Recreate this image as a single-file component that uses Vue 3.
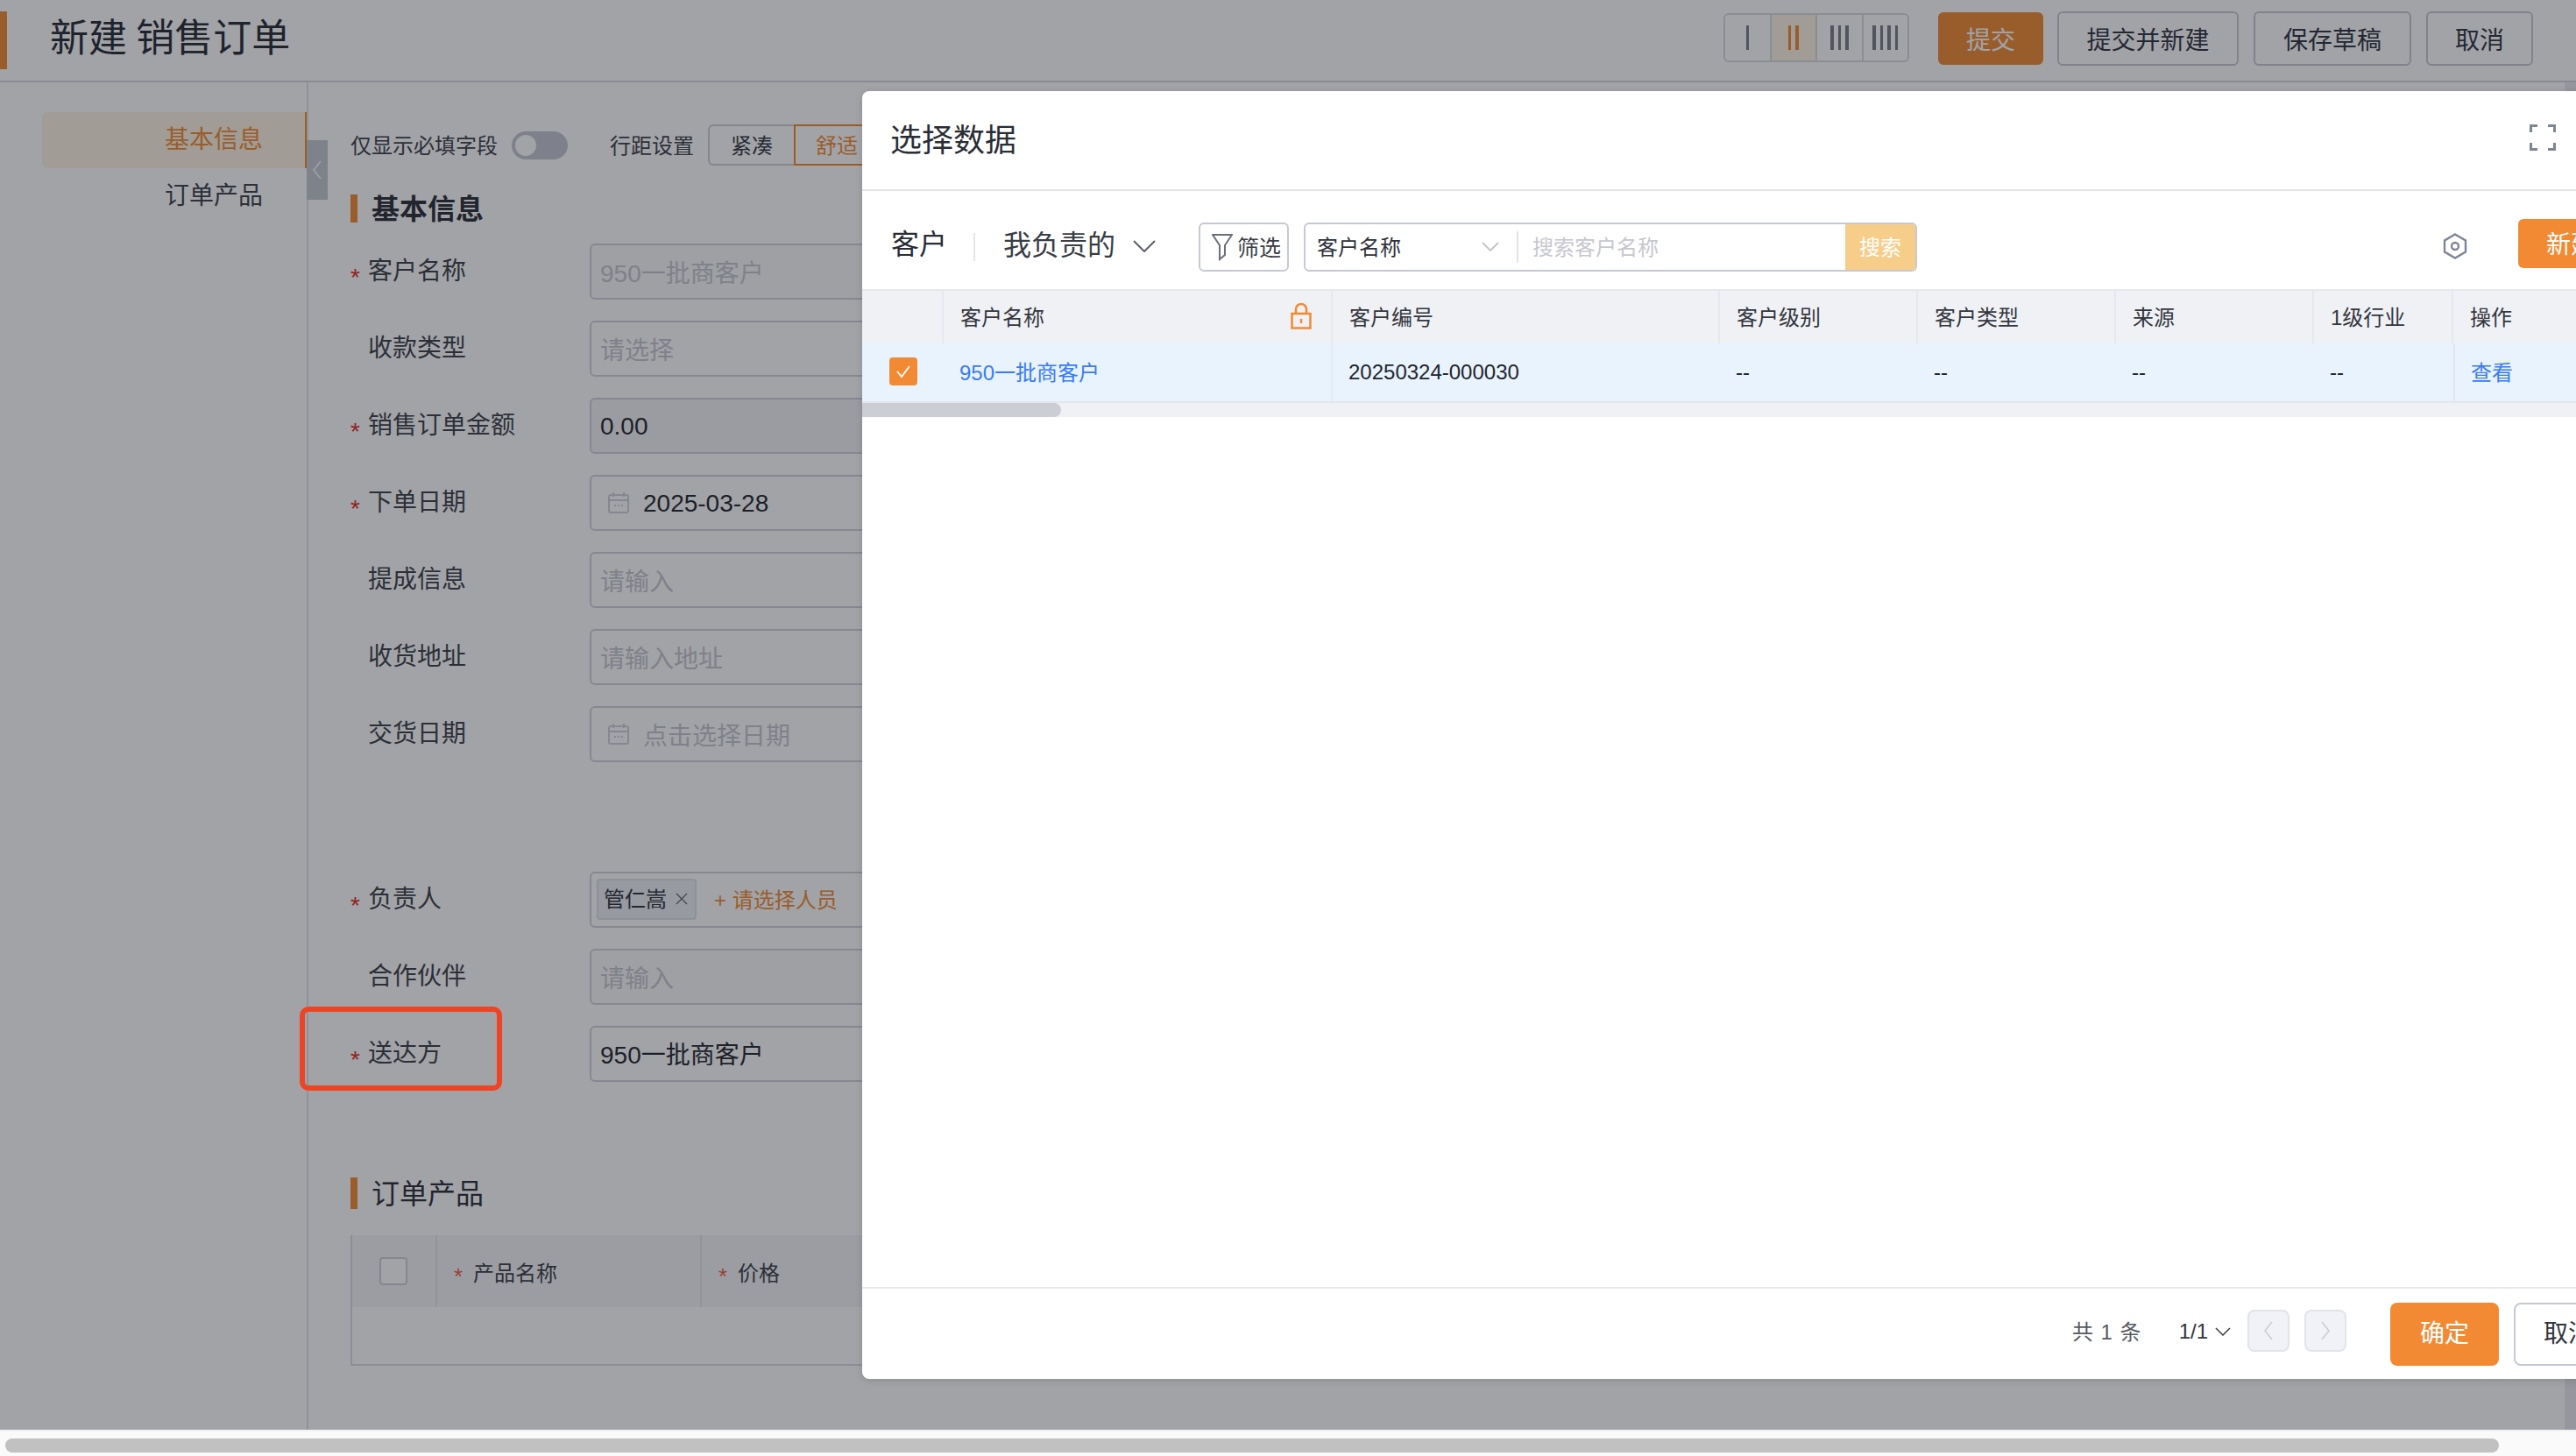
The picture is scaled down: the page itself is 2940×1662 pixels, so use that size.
<script setup>
const barGroups = [1, 2, 3, 4]
const actions = [
  { text: '提交', cls: 'act-primary' },
  { text: '提交并新建', cls: 'act-wide' },
  { text: '保存草稿', cls: 'act-draft' },
  { text: '取消', cls: 'act-cancel' }
]
const rowsA = [
  { label: '客户名称', req: true, text: '950一批商客户', kind: 'ph', bg: 'soft' },
  { label: '收款类型', text: '请选择', kind: 'ph' },
  { label: '销售订单金额', req: true, text: '0.00', kind: 'val low', bg: 'dis' },
  { label: '下单日期', req: true, text: '2025-03-28', kind: 'val low', icon: true },
  { label: '提成信息', text: '请输入', kind: 'ph' },
  { label: '收货地址', text: '请输入地址', kind: 'ph' },
  { label: '交货日期', text: '点击选择日期', kind: 'ph', icon: true }
]
const heads = ['客户级别', '客户类型', '来源', '1级行业']
</script>

<template>
  <div class="app">
    <div class="viewport">
      <header class="page-head">
        <i class="head-mark"></i>
        <h1 class="page-title">新建 销售订单</h1>
        <div class="bars">
          <div v-for="n in barGroups" :key="n" class="bar-cell" :class="{ on: n === 2 }">
            <i v-for="b in n" :key="b" class="bar"></i>
          </div>
        </div>
        <div class="actions">
          <button v-for="a in actions" :key="a.text" class="act" :class="a.cls">{{ a.text }}</button>
        </div>
      </header>

      <div class="page-body">
        <aside class="side">
          <div class="nav nav-on">基本信息</div>
          <div class="nav">订单产品</div>
          <div class="collapse">
            <svg width="12" height="24" viewBox="0 0 12 24"><path d="M10 2 2 12l8 10" fill="none" stroke="#fff" stroke-width="1.4"/></svg>
          </div>
        </aside>

        <main class="main">
          <div class="opts">
            <span class="opt-text">仅显示必填字段</span>
            <span class="toggle"><i class="knob"></i></span>
            <span class="opt-text opt-gap">行距设置</span>
            <div class="seg">
              <span class="seg-item">紧凑</span>
              <span class="seg-item seg-on">舒适</span>
            </div>
          </div>

          <h2 class="sec sec-bold"><i class="sec-mark"></i><span class="sec-text">基本信息</span></h2>

          <div class="form">
            <div v-for="r in rowsA" :key="r.label" class="row">
              <label class="lab"><i class="star">{{ r.req ? '*' : '' }}</i>{{ r.label }}</label>
              <div class="inp" :class="r.bg">
                <svg v-if="r.icon" class="cal" width="24" height="24" viewBox="0 0 24 24" fill="none" stroke="#d0d2da" stroke-width="2">
                  <rect x="1" y="3" width="22" height="20" rx="2"/>
                  <path d="M1 9h22M6 0v5M18 0v5M7 15h2M11 15h2M15 15h2"/>
                </svg>
                <span :class="r.kind">{{ r.text }}</span>
              </div>
            </div>

            <div class="row row-owner">
              <label class="lab"><i class="star">*</i>负责人</label>
              <div class="inp">
                <span class="tag"><span class="up2">管仁嵩</span>
                  <svg width="16" height="16" viewBox="0 0 16 16"><path d="M2 2l12 12M14 2 2 14" stroke="#666b78" stroke-width="1.4" fill="none"/></svg>
                </span>
                <span class="add up2">+ 请选择人员</span>
              </div>
            </div>
            <div class="row">
              <label class="lab"><i class="star"></i>合作伙伴</label>
              <div class="inp soft"><span class="ph">请输入</span></div>
            </div>
            <div class="row">
              <label class="lab"><i class="star">*</i>送达方</label>
              <div class="inp"><span class="val up1">950一批商客户</span></div>
            </div>
          </div>

          <h2 class="sec sec-second"><i class="sec-mark sec-mark-tall"></i><span class="sec-text">订单产品</span></h2>

          <div class="ptable">
            <div class="ptable-head">
              <div class="pc pc-check"><i class="pbox"></i></div>
              <div class="pc pc-name"><i class="pstar">*</i>产品名称</div>
              <div class="pc"><i class="pstar">*</i>价格</div>
            </div>
            <div class="ptable-body"></div>
          </div>
        </main>

        <div class="vscroll"></div>
      </div>

      <div class="overlay"></div>
      <div class="mark-box"></div>

      <section class="modal">
        <div class="m-head">
          <span class="m-title">选择数据</span>
          <svg width="30" height="30" viewBox="0 0 30 30" fill="none" stroke="#7e8594" stroke-width="3">
            <path d="M1.500 9V1.500H9M21 1.500h7.500V9M28.500 21v7.500H21M9 28.500H1.500V21"/>
          </svg>
        </div>

        <div class="m-tools">
          <span class="m-obj">客户</span>
          <i class="m-div"></i>
          <span class="m-scope">我负责的</span>
          <svg class="m-chev" width="26" height="14" viewBox="0 0 26 14"><path d="M1 1l12 12L25 1" fill="none" stroke="#5c606a" stroke-width="2"/></svg>
          <button class="m-filter">
            <svg width="24" height="32" viewBox="0 0 24 32" fill="none" stroke="#6a6f7b" stroke-width="2">
              <path d="M1 2h22L15 14v11l-6 5V14z"/>
            </svg>
            <span class="up2">筛选</span>
          </button>
          <div class="m-search">
            <div class="m-sel"><span class="up2">客户名称</span>
              <svg width="20" height="12" viewBox="0 0 20 12"><path d="M1 1l9 9 9-9" fill="none" stroke="#c0c3cb" stroke-width="1.800"/></svg>
            </div>
            <span class="m-input up2">搜索客户名称</span>
            <span class="m-go"><span class="up2">搜索</span></span>
          </div>
          <svg class="m-gear" width="30" height="30" viewBox="0 0 30 30" fill="none" stroke="#7e8594" stroke-width="2.400">
            <path d="M15 1.500 27 8.500v13L15 28.500 3 21.500v-13z"/>
            <circle cx="15" cy="15" r="4"/>
          </svg>
          <button class="m-new">新建</button>
        </div>

        <div class="grid grid-head">
          <div class="gc"></div>
          <div class="gc gc-lock">客户名称
            <svg width="24" height="30" viewBox="0 0 24 30" fill="none" stroke="#f18a33" stroke-width="2.500">
              <rect x="1.500" y="12" width="21" height="16.500"/>
              <path d="M6 12V7a6 6 0 0 1 12 0v5M12 18v5"/>
            </svg>
          </div>
          <div class="gc">客户编号</div>
          <div v-for="h in heads" :key="h" class="gc">{{ h }}</div>
          <div class="gc">操作</div>
        </div>
        <div class="grid grid-row">
          <div class="gd gd-check">
            <span class="ck">
              <svg width="18" height="16" viewBox="0 0 18 16"><path d="M2 8l5 6L16 2" fill="none" stroke="#fff" stroke-width="1.800"/></svg>
            </span>
          </div>
          <div class="gd gd-fix link">950一批商客户</div>
          <div class="gd">20250324-000030</div>
          <div v-for="h in heads" :key="h" class="gd">--</div>
          <div class="gd gd-fix-left link">查看</div>
        </div>
        <div class="track"><i class="thumb"></i></div>

        <div class="m-space"></div>

        <footer class="m-foot">
          <span class="f-total">共 1 条</span>
          <span class="f-page">1/1</span>
          <svg class="f-chev" width="18" height="10" viewBox="0 0 18 10"><path d="M1 1l8 8 8-8" fill="none" stroke="#3c3f46" stroke-width="1.500"/></svg>
          <span class="f-btn">
            <svg width="12" height="24" viewBox="0 0 12 24"><path d="M10 2 2 12l8 10" fill="none" stroke="#c8cbd3" stroke-width="1.500"/></svg>
          </span>
          <span class="f-btn f-next">
            <svg width="12" height="24" viewBox="0 0 12 24"><path d="M2 2l8 10-8 10" fill="none" stroke="#c8cbd3" stroke-width="1.500"/></svg>
          </span>
          <button class="f-ok">确定</button>
          <button class="f-no">取消</button>
        </footer>
      </section>
    </div>
    <div class="hscroll"><i class="hthumb"></i></div>
  </div>
</template>

<style>
html, body { margin: 0; background: #fff; overflow: hidden; }
</style>

<style scoped>
* { box-sizing: border-box; }
i { font-style: normal; display: block; }
h1, h2 { margin: 0; font-weight: 400; }
button { font: inherit; cursor: pointer; padding: 0; }
.up2 { padding-bottom: 3px; }
.up1 { padding-bottom: 2px; }
.low { padding-top: 2px; }

.app {
  width: 2940px;
  height: 1662px;
  display: flex;
  flex-direction: column;
  overflow: hidden;
  background: #fff;
  color: #2b2e36;
  font-family: "Liberation Sans", "Noto Sans CJK SC", sans-serif;
}
.viewport { position: relative; height: 1632px; overflow: hidden; flex: none; }

.page-head {
  height: 94px;
  display: flex;
  align-items: center;
  border-bottom: 2px solid #d6d7dc;
  padding-right: 49px;
}
.head-mark { width: 8px; height: 66px; background: #f18a33; margin-right: 49px; }
.page-title { font-size: 44px; line-height: 60px; color: #262a33; margin-top: -4px; word-spacing: -2px; }
.bars {
  margin-left: auto;
  margin-top: -6px;
  display: flex;
  height: 56px;
  width: 212px;
  border: 2px solid #d8dae0;
  border-radius: 6px;
  overflow: hidden;
}
.bar-cell {
  flex: 1;
  display: flex;
  align-items: center;
  justify-content: center;
  gap: 5px;
  border-right: 2px solid #d8dae0;
}
.bar-cell:last-child { border-right: 0; }
.bar-cell.on { background: #fdf5e3; }
.bar { width: 3.5px; height: 28px; background: #7a7d87; }
.bar-cell.on .bar { background: #f18a33; }
.actions { display: flex; gap: 17px; margin-left: 33px; align-items: center; margin-top: -4px; }
.act {
  height: 62px;
  font-size: 28px;
  background: #fff;
  color: #2f3340;
  border: 2px solid #c7c9d2;
  border-radius: 6px;
}
.act-primary { width: 120px; height: 60px; background: #f18a33; border-color: #f18a33; color: #fff; margin-right: -1px; }
.act-wide { width: 207px; }
.act-draft { width: 180px; }
.act-cancel { width: 122px; }

.page-body { display: flex; height: 1538px; }
.side {
  position: relative;
  width: 352px;
  flex: none;
  padding-top: 34px;
  border-right: 2px solid #e2e3e8;
}
.nav {
  margin-left: 48px;
  height: 60px;
  line-height: 64px;
  padding-left: 140px;
  font-size: 28px;
  color: #3d4048;
}
.nav-on {
  height: 64px;
  line-height: 64px;
  background: #fdf5e3;
  color: #f18a33;
  border-right: 2px solid #f18a33;
  border-radius: 6px 0 0 6px;
}
.collapse {
  position: absolute;
  left: 350px;
  top: 66px;
  width: 24px;
  height: 68px;
  background: #c3c8d0;
  display: flex;
  align-items: center;
  justify-content: center;
}

.main { flex: 1; padding: 48px 0 0 48px; min-width: 0; overflow: hidden; }
.opts { display: flex; align-items: center; height: 47px; white-space: nowrap; }
.opt-text { font-size: 24px; color: #3d4048; padding-bottom: 3px; }
.opt-gap { margin-left: 48px; }
.toggle {
  width: 64px;
  height: 32px;
  margin-left: 16px;
  border-radius: 16px;
  background: #c4c7d0;
  padding: 4px;
}
.knob { width: 24px; height: 24px; border-radius: 50%; background: #fff; }
.seg { display: flex; height: 47px; margin-left: 16px; font-size: 24px; }
.seg-item {
  width: 98px;
  display: flex;
  align-items: center;
  justify-content: center;
  padding-bottom: 3px;
  border: 2px solid #cfd1d8;
  border-right: 0;
  border-radius: 6px 0 0 6px;
  color: #333640;
}
.seg-on { border: 2px solid #f18a33; border-radius: 0; color: #f18a33; }

.sec {
  display: flex;
  align-items: center;
  font-size: 32px;
  height: 32px;
  margin-top: 33px;
  color: #2b2e36;
  white-space: nowrap;
}
.sec-text { padding-bottom: 5px; }
.sec-bold { font-weight: 700; }
.sec-mark { width: 8px; height: 32px; background: #f18a33; margin-right: 16px; }
.sec-mark-tall { height: 36px; }
.sec-second { height: 36px; margin-top: 109px; }

.form { margin-top: 24px; }
.row { display: flex; height: 64px; margin-bottom: 24px; align-items: center; }
.row:last-child { margin-bottom: 0; }
.row-owner { margin-top: 125px; }
.lab {
  width: 273px;
  flex: none;
  display: flex;
  align-items: center;
  font-size: 28px;
  line-height: 40px;
  color: #3b3e46;
}
.star {
  width: 20px;
  flex: none;
  color: #e02a1d;
  font-size: 28px;
  line-height: 28px;
  padding-top: 14px;
}
.inp {
  width: 640px;
  height: 64px;
  flex: none;
  display: flex;
  align-items: center;
  padding: 0 10px;
  border: 2px solid #d0d2da;
  border-radius: 6px;
  background: #fff;
  font-size: 28px;
  white-space: nowrap;
}
.inp.soft { background: #fafafb; }
.inp.dis { background: #f3f4f6; }
.ph { color: #c5c7cd; }
.val { color: #23262d; }
.cal { margin: 0 16px 0 9px; flex: none; }
.tag {
  display: flex;
  align-items: center;
  gap: 9px;
  height: 47px;
  width: 114px;
  margin: -2px 0 0 -4px;
  padding-left: 6px;
  font-size: 24px;
  color: #30333b;
  background: #edf0f6;
  border: 2px solid #dfe2e9;
  border-radius: 4px;
  white-space: nowrap;
}
.add { margin-left: 20px; font-size: 24px; color: #f18a33; }

.ptable { margin-top: 30px; width: 900px; border: 2px solid #dcdde2; border-top: 0; border-right: 0; }
.ptable-head { display: flex; height: 82px; background: #f4f5f7; font-size: 24px; color: #3b3e46; }
.pc { display: flex; align-items: center; flex: 1; white-space: nowrap; }
.pc-check { flex: 0 0 97px; justify-content: center; border-right: 2px solid #e6e7ec; padding-right: 2px; }
.pc-name { flex: 0 0 302px; border-right: 2px solid #e6e7ec; }
.pstar { color: #ef5b4f; font-size: 26px; width: 22px; margin: 12px 0 0 19px; line-height: 26px; }
.pbox { width: 32px; height: 32px; background: #fff; border: 2px solid #cfd1d8; border-radius: 4px; }
.ptable-body { height: 65px; }

.vscroll { position: absolute; right: 0; top: 94px; bottom: 0; width: 13px; background: #ececf0; }

.overlay { position: absolute; inset: 0; z-index: 1; background: rgba(22, 25, 35, 0.4); }
.mark-box {
  position: absolute;
  z-index: 2;
  left: 342px;
  top: 1149px;
  width: 231px;
  height: 96px;
  border: 6px solid #ef4423;
  border-radius: 10px;
}

.modal {
  position: absolute;
  z-index: 3;
  left: 984px;
  top: 104px;
  width: 2042px;
  height: 1470px;
  display: flex;
  flex-direction: column;
  background: #fff;
  border-radius: 8px;
  box-shadow: 0 2px 10px rgba(0, 0, 0, 0.12);
}
.m-head {
  height: 114px;
  flex: none;
  display: flex;
  align-items: center;
  justify-content: space-between;
  padding: 0 109px 6px 32px;
  border-bottom: 2px solid #e3e4e9;
}
.m-title { font-size: 36px; color: #2a2d35; }
.m-tools { height: 112px; flex: none; display: flex; align-items: flex-start; padding: 36px 32px 0 33px; }
.m-obj { font-size: 32px; line-height: 50px; color: #2a2d35; width: 94px; }
.m-div { width: 2px; height: 32px; margin-top: 12px; background: #e3e4e9; }
.m-scope { font-size: 32px; line-height: 52px; color: #3a3d45; margin-left: 32px; }
.m-chev { margin: 20px 0 0 20px; }
.m-filter {
  width: 103px;
  height: 56px;
  margin-left: 49px;
  display: flex;
  align-items: center;
  gap: 5px;
  padding-left: 13px;
  font-size: 25px;
  color: #3a3d45;
  background: #fff;
  border: 2px solid #c6c9d3;
  border-radius: 6px;
}
.m-search {
  width: 700px;
  height: 56px;
  margin-left: 17px;
  display: flex;
  align-items: center;
  border: 2px solid #c6c9d3;
  border-radius: 6px;
  font-size: 24px;
  overflow: hidden;
}
.m-sel {
  width: 243px;
  height: 36px;
  display: flex;
  align-items: center;
  justify-content: space-between;
  padding: 0 20px 0 13px;
  border-right: 2px solid #e3e4e9;
  color: #2f323a;
}
.m-input { flex: 1; padding-left: 16px; color: #c6c8ce; }
.m-go {
  width: 80px;
  height: 100%;
  display: flex;
  align-items: center;
  justify-content: center;
  background: #f7cd8a;
  color: #fff;
}
.m-gear { margin: 12px 0 0 auto; }
.m-new {
  width: 120px;
  height: 56px;
  margin: -4px 0 0 57px;
  padding-bottom: 3px;
  font-size: 28px;
  color: #fff;
  background: #f18a33;
  border: 0;
  border-radius: 6px;
}

.grid {
  display: grid;
  grid-template-columns: 93px 444px 442px 226px 226px 226px 159px 1fr;
  flex: none;
  font-size: 24px;
}
.grid-head { height: 62px; background: #f0f1f5; border-top: 2px solid #e6e8ef; color: #33363e; }
.gc {
  display: flex;
  align-items: center;
  padding: 0 0 4px 19px;
  border-right: 2px solid #e6e8ef;
  position: relative;
}
.gc:last-child { border-right: 0; }
.gc-lock { justify-content: space-between; padding-right: 22px; }
.gc-lock svg { margin-top: 2px; }
.grid-row { height: 68px; background: #e8f3fe; border-bottom: 2px solid #e3e6ec; color: #22252c; }
.gd { display: flex; align-items: center; padding-left: 18px; }
.gd-check { padding-left: 31px; padding-bottom: 2px; }
.gd-fix { border-right: 2px solid #e3eaf3; }
.gd-fix-left { border-left: 2px solid #e3e6ec; }
.link { color: #3a7bf5; padding-bottom: 3px; }
.ck {
  width: 32px;
  height: 32px;
  display: flex;
  align-items: center;
  justify-content: center;
  background: #f18a33;
  border-radius: 4px;
}
.track { height: 16px; flex: none; background: #f0f1f5; }
.thumb { width: 227px; height: 16px; background: #cbced5; border-radius: 0 8px 8px 0; }
.m-space { flex: 1; }
.m-foot {
  height: 105px;
  flex: none;
  display: flex;
  align-items: center;
  justify-content: flex-end;
  padding: 0 33px 0 0;
  border-top: 2px solid #e6e8f2;
  font-size: 24px;
  white-space: nowrap;
}
.f-total { color: #575a62; letter-spacing: 1px; margin-top: -9px; }
.f-page { margin-left: 42px; color: #33363d; margin-top: -6px; }
.f-chev { margin: -6px 0 0 8px; }
.f-btn {
  width: 48px;
  height: 48px;
  margin: -8px 0 0 19px;
  display: flex;
  align-items: center;
  justify-content: center;
  background: #f1f2f7;
  border: 2px solid #e2e4ea;
  border-radius: 8px;
}
.f-next { margin-left: 17px; }
.f-ok {
  width: 124px;
  height: 72px;
  margin-left: 50px;
  padding-bottom: 6px;
  font-size: 28px;
  color: #fff;
  background: #f18a33;
  border: 0;
  border-radius: 8px;
}
.f-no {
  width: 124px;
  height: 72px;
  margin-left: 17px;
  padding-bottom: 6px;
  font-size: 28px;
  color: #33363d;
  background: #fff;
  border: 2px solid #c6c9d3;
  border-radius: 8px;
}

.hscroll { flex: 1; position: relative; padding: 8px 0 0 6px; background: #fafafa; border-top: 2px solid #f2f2f2; }
.hthumb { width: 2846px; height: 16px; border-radius: 8px; background: #c1c1c1; }
</style>
